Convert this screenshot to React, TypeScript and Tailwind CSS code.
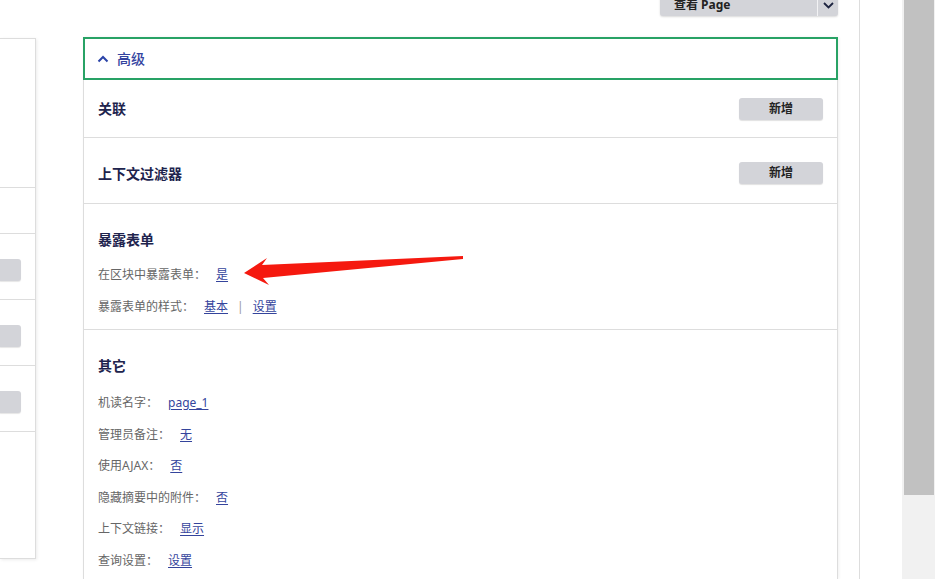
import React from 'react'

// ── Small pieces ──────────────────────────────────────────────────────────────

function AddButton() {
  return (
    <button className="w-[84px] h-[22px] rounded-[3px] bg-[#d3d4d9] shadow-[0_1px_1px_rgba(0,0,0,0.12)] text-[12px] font-bold text-[#222]">
      新增
    </button>
  )
}

function Item({ label, children }: { label: string; children: React.ReactNode }) {
  return (
    <div className="flex items-center h-[20px] text-[12px] text-[#666]">
      <span>{label}</span>
      <span className="ml-[10px] flex items-center">{children}</span>
    </div>
  )
}

function Link({ children }: { children: React.ReactNode }) {
  return <a className="text-[#34449c] underline underline-offset-2 cursor-pointer">{children}</a>
}

function Arrow() {
  return (
    <svg className="absolute left-0 top-0 pointer-events-none" width="935" height="579">
      <polygon
        points="244,273 267,258 262,265 463,256 463,259 263,278 269,285"
        fill="#f5190f"
      />
    </svg>
  )
}

// ── Page ──────────────────────────────────────────────────────────────────────

export default function App() {
  return (
    <div
      className="relative w-[935px] h-[579px] overflow-hidden bg-white flex"
      style={{ fontFamily: '"Noto Sans", "Noto Sans CJK SC", sans-serif' }}
    >
      {/* left panel, cut off */}
      <div className="w-[36px] mt-[38px] h-[521px] border-t border-r border-b border-[#ddd] shadow-[1px_1px_3px_rgba(0,0,0,0.08)] flex flex-col">
        <div className="h-[149px] border-b border-[#ddd]" />
        <div className="h-[46px] border-b border-[#ddd]" />
        {[0, 1, 2].map(i => (
          <div key={i} className="h-[66px] border-b border-[#ddd] pt-[25px]">
            <div className="w-[21px] h-[22px] rounded-r-[3px] bg-[#d3d4d9] shadow-[0_1px_1px_rgba(0,0,0,0.1)]" />
          </div>
        ))}
      </div>

      {/* main column */}
      <div className="ml-[47px] w-[755px] flex flex-col">
        <div className="h-[16px] flex justify-end">
          <div className="-mt-[6px] w-[178px] h-[22px] rounded-b-[3px] bg-[#d3d4d9] shadow-[0_1px_2px_rgba(0,0,0,0.15)] flex items-center">
            <span className="flex-1 pl-[14px] text-[12px] font-bold text-[#222]">查看 Page</span>
            <div className="w-px h-full bg-[#f2f2f4]" />
            <div className="w-[20px] flex items-center justify-center">
              <svg width="11" height="7" viewBox="0 0 11 7">
                <path d="M1 1l4.5 4.5L10 1" fill="none" stroke="#1d2440" strokeWidth="1.8" />
              </svg>
            </div>
          </div>
        </div>

        <div className="mt-[21px] flex-1 border-l border-r border-[#ddd] shadow-[1px_0_3px_rgba(0,0,0,0.06)]">
          {/* header */}
          <div className="h-[43px] border-2 border-[#28a265] -mx-px flex items-center pl-[12px]">
            <svg width="12" height="8" viewBox="0 0 12 8">
              <path d="M1.5 6.5L6 2l4.5 4.5" fill="none" stroke="#2b44a8" strokeWidth="2" />
            </svg>
            <span className="ml-[8px] text-[14px] font-medium text-[#3444a0]">高级</span>
          </div>

          <div className="h-[58px] border-b border-[#ddd] flex items-center justify-between pl-[14px] pr-[14px]">
            <span className="text-[14px] font-bold text-[#20234d]">关联</span>
            <AddButton />
          </div>

          <div className="h-[66px] pt-[5px] border-b border-[#ddd] flex items-center justify-between pl-[14px] pr-[14px]">
            <span className="text-[14px] font-bold text-[#20234d]">上下文过滤器</span>
            <AddButton />
          </div>

          <div className="border-b border-[#ddd] pl-[14px] pt-[25px] pb-[12px]">
            <div className="h-[20px] flex items-center text-[14px] font-bold text-[#20234d]">暴露表单</div>
            <div className="mt-[16px] flex flex-col gap-[12px]">
              <Item label="在区块中暴露表单：">
                <Link>是</Link>
              </Item>
              <Item label="暴露表单的样式：">
                <Link>基本</Link>
                <span className="mx-[9px] text-[#999]">|</span>
                <Link>设置</Link>
              </Item>
            </div>
          </div>

          <div className="pl-[14px] pt-[25px]">
            <div className="h-[20px] flex items-center text-[14px] font-bold text-[#20234d]">其它</div>
            <div className="mt-[18px] flex flex-col gap-[11.5px]">
              <Item label="机读名字：">
                <Link>page_1</Link>
              </Item>
              <Item label="管理员备注：">
                <Link>无</Link>
              </Item>
              <Item label="使用AJAX：">
                <Link>否</Link>
              </Item>
              <Item label="隐藏摘要中的附件：">
                <Link>否</Link>
              </Item>
              <Item label="上下文链接：">
                <Link>显示</Link>
              </Item>
              <Item label="查询设置：">
                <Link>设置</Link>
              </Item>
            </div>
          </div>
        </div>
      </div>

      {/* right divider */}
      <div className="ml-[21px] w-px h-full bg-[#ddd]" />

      {/* scrollbar */}
      <div className="ml-auto w-[33px] h-full bg-[#f1f1f1] pl-[2px] pr-[1px]">
        <div className="h-[495px] bg-[#c1c1c1]" />
      </div>

      <Arrow />
    </div>
  )
}
